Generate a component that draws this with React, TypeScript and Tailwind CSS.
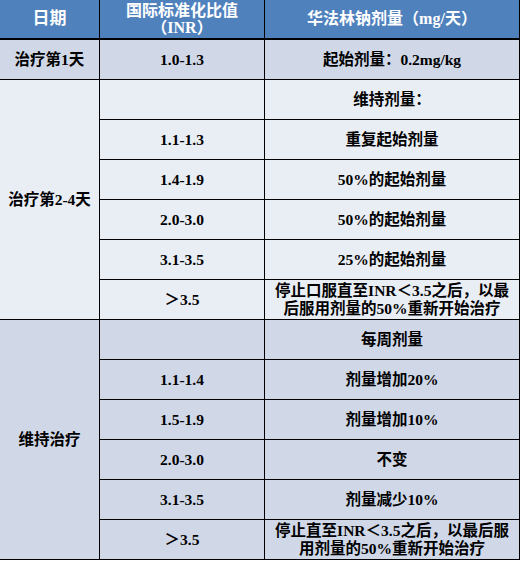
import React from "react";

const font = { fontFamily: '"Liberation Serif", "Noto Sans CJK SC", serif' };

type Row = { inr: string; dose: React.ReactNode };

const sec2: Row[] = [
  { inr: "", dose: "维持剂量：" },
  { inr: "1.1-1.3", dose: "重复起始剂量" },
  { inr: "1.4-1.9", dose: "50%的起始剂量" },
  { inr: "2.0-3.0", dose: "50%的起始剂量" },
  { inr: "3.1-3.5", dose: "25%的起始剂量" },
  {
    inr: "＞3.5",
    dose: (
      <>
        停止口服直至INR＜3.5之后，以最
        <br />
        后服用剂量的50%重新开始治疗
      </>
    ),
  },
];
const sec3: Row[] = [
  { inr: "", dose: "每周剂量" },
  { inr: "1.1-1.4", dose: "剂量增加20%" },
  { inr: "1.5-1.9", dose: "剂量增加10%" },
  { inr: "2.0-3.0", dose: "不变" },
  { inr: "3.1-3.5", dose: "剂量减少10%" },
  {
    inr: "＞3.5",
    dose: (
      <>
        停止直至INR＜3.5之后，以最后服
        <br />
        用剂量的50%重新开始治疗
      </>
    ),
  },
];

function Section({ label, rows, bg, start }: { label: string; rows: Row[]; bg: string; start: number }) {
  return (
    <>
      <div
        className={`${bg} border-r border-b border-black flex items-center justify-center text-[15.5px]`}
        style={{ gridRow: `${start} / span ${rows.length}`, gridColumn: "1" }}
      >
        {label}
      </div>
      {rows.map((r, i) => (
        <React.Fragment key={i}>
          <div
            className={`${bg} border-r border-b border-black flex items-center justify-center text-[15.5px]`}
            style={{ gridRow: `${start + i}`, gridColumn: "2" }}
          >
            {r.inr}
          </div>
          <div
            className={`${bg} border-r border-b border-black flex items-center justify-center text-center text-[15.5px] leading-[18px] whitespace-nowrap`}
            style={{ gridRow: `${start + i}`, gridColumn: "3" }}
          >
            <span>{r.dose}</span>
          </div>
        </React.Fragment>
      ))}
    </>
  );
}

export default function App() {
  return (
    <div className="w-[520px] h-[561px] bg-white font-bold text-black" style={font}>
      <div className="grid grid-cols-[100px_165px_255px] grid-rows-[repeat(14,40px)]">
        <div className="bg-[#4f81bd] text-white border-r border-b-2 border-black flex items-center justify-center text-[17px]">
          日期
        </div>
        <div className="bg-[#4f81bd] text-white border-r border-b-2 border-black flex flex-col items-center justify-center text-[16px] leading-[17px]">
          <span>国际标准化比值</span>
          <span>（INR）</span>
        </div>
        <div className="bg-[#4f81bd] text-white border-r border-b-2 border-black flex items-center justify-center text-[16px]">
          华法林钠剂量（mg/天）
        </div>
        <div className="bg-[#d0d8e8] border-r border-b border-black flex items-center justify-center text-[15.5px]">
          治疗第1天
        </div>
        <div className="bg-[#d0d8e8] border-r border-b border-black flex items-center justify-center text-[15.5px]">
          1.0-1.3
        </div>
        <div className="bg-[#d0d8e8] border-r border-b border-black flex items-center justify-center text-[15.5px]">
          起始剂量：0.2mg/kg
        </div>
        <Section label="治疗第2-4天" rows={sec2} bg="bg-[#e9edf4]" start={3} />
        <Section label="维持治疗" rows={sec3} bg="bg-[#d0d8e8]" start={9} />
      </div>
    </div>
  );
}
